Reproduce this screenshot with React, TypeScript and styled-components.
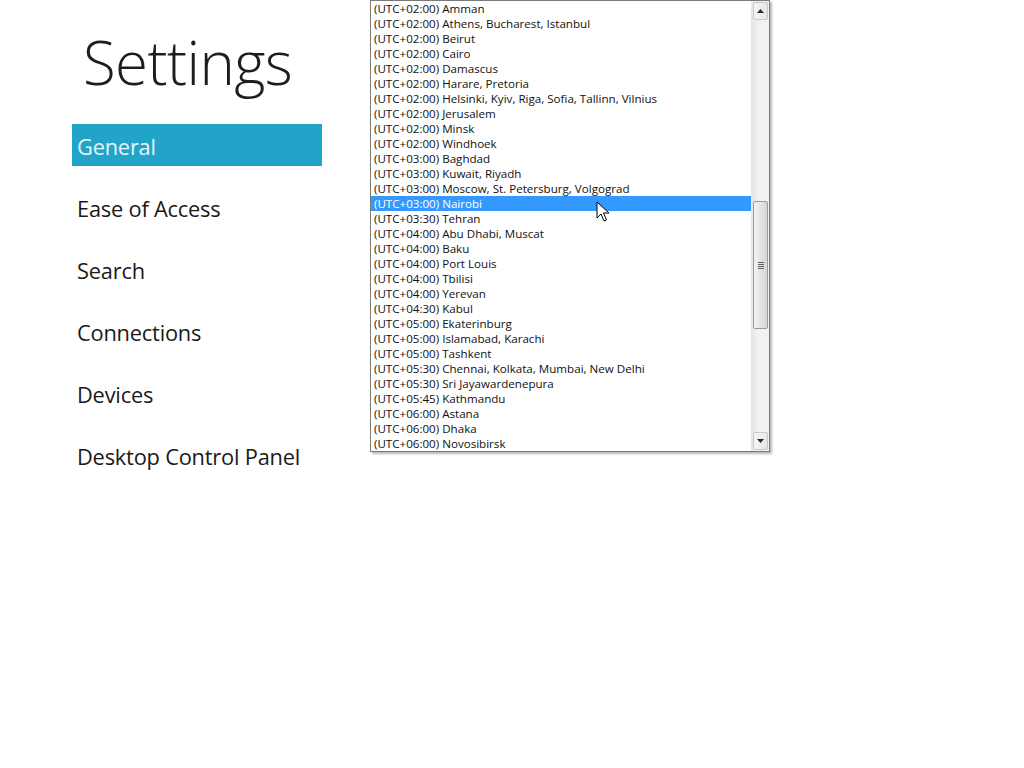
import React from "react";
import styled, { createGlobalStyle } from "styled-components";

const zones: string[] = [
    "(UTC+02:00) Amman",
    "(UTC+02:00) Athens, Bucharest, Istanbul",
    "(UTC+02:00) Beirut",
    "(UTC+02:00) Cairo",
    "(UTC+02:00) Damascus",
    "(UTC+02:00) Harare, Pretoria",
    "(UTC+02:00) Helsinki, Kyiv, Riga, Sofia, Tallinn, Vilnius",
    "(UTC+02:00) Jerusalem",
    "(UTC+02:00) Minsk",
    "(UTC+02:00) Windhoek",
    "(UTC+03:00) Baghdad",
    "(UTC+03:00) Kuwait, Riyadh",
    "(UTC+03:00) Moscow, St. Petersburg, Volgograd",
    "(UTC+03:00) Nairobi",
    "(UTC+03:30) Tehran",
    "(UTC+04:00) Abu Dhabi, Muscat",
    "(UTC+04:00) Baku",
    "(UTC+04:00) Port Louis",
    "(UTC+04:00) Tbilisi",
    "(UTC+04:00) Yerevan",
    "(UTC+04:30) Kabul",
    "(UTC+05:00) Ekaterinburg",
    "(UTC+05:00) Islamabad, Karachi",
    "(UTC+05:00) Tashkent",
    "(UTC+05:30) Chennai, Kolkata, Mumbai, New Delhi",
    "(UTC+05:30) Sri Jayawardenepura",
    "(UTC+05:45) Kathmandu",
    "(UTC+06:00) Astana",
    "(UTC+06:00) Dhaka",
    "(UTC+06:00) Novosibirsk",
];

const menu = ["General", "Ease of Access", "Search", "Connections", "Devices", "Desktop Control Panel"];

const App: React.FC = () => {
    const selected = 13;
    return (
        <>
            <GlobalStyle />
            <Page>
                <Sidebar>
                    <Title>Settings</Title>
                    <Menu>
                        {menu.map((m, i) => (
                            <MenuItem key={m} active={i === 0}>{m}</MenuItem>
                        ))}
                    </Menu>
                </Sidebar>
                <ListBox>
                    <Options>
                        {zones.map((z, i) => (
                            <Option key={z} selected={i === selected}>{z}</Option>
                        ))}
                    </Options>
                    <ScrollBar>
                        <ArrowButton>
                            <svg width="7" height="4" viewBox="0 0 7 4"><path d="M0 4 L3.5 0 L7 4 Z" fill="#2b2b2b" /></svg>
                        </ArrowButton>
                        <Track>
                            <Spacer style={{ height: 180 }} />
                            <Thumb>
                                <Grip><span /><span /><span /><span /></Grip>
                            </Thumb>
                        </Track>
                        <ArrowButton>
                            <svg width="7" height="4" viewBox="0 0 7 4"><path d="M0 0 L7 0 L3.5 4 Z" fill="#2b2b2b" /></svg>
                        </ArrowButton>
                    </ScrollBar>
                    <Cursor width="14" height="22" viewBox="0 0 14 22">
                        <path d="M1 1 L1 17 L5 13 L8 20 L10.5 19 L7.5 12 L13 12 Z" fill="#fff" stroke="#000" strokeWidth="1" strokeLinejoin="round" />
                    </Cursor>
                </ListBox>
            </Page>
        </>
    );
};

export default App;


const GlobalStyle = createGlobalStyle`
    html, body {
        margin: 0;
        padding: 0;
        background: #ffffff;
    }
    body {
        font-family: "Open Sans", "Noto Sans", sans-serif;
    }
`;

const Page = styled.div`
    display: flex;
    align-items: flex-start;
    width: 1024px;
    height: 768px;
    overflow: hidden;
    background: #ffffff;
`;

const Sidebar = styled.div`
    display: flex;
    flex-direction: column;
    width: 250px;
    padding: 20px 0 0 72px;
    margin-right: 48px;
`;

const Title = styled.h1`
    margin: 0 0 0 11px;
    height: 104px;
    font-family: "Open Sans", sans-serif;
    font-weight: 300;
    font-size: 60px;
    line-height: 84px;
    color: #1d1d1d;
    letter-spacing: -0.6px;
`;

const Menu = styled.div`
    display: flex;
    flex-direction: column;
    gap: 20px;
`;

const MenuItem = styled.div<{ active?: boolean }>`
    height: 42px;
    padding: 3px 0 0 5px;
    box-sizing: border-box;
    display: flex;
    align-items: center;
    font-family: "Open Sans", sans-serif;
    font-weight: 400;
    font-size: 21.8px;
    letter-spacing: -0.2px;
    color: ${p => (p.active ? "#e4f7fd" : "#1a1a1a")};
    background: ${p => (p.active ? "#22a3c8" : "transparent")};
`;

const ListBox = styled.div`
    position: relative;
    display: flex;
    width: 398px;
    height: 450px;
    border: 1px solid #7a7a7a;
    background: #ffffff;
    box-shadow: 2px 2px 2px rgba(0, 0, 0, 0.28);
`;

const Options = styled.div`
    flex: 1;
    display: flex;
    flex-direction: column;
`;

const Option = styled.div<{ selected?: boolean }>`
    height: 15px;
    line-height: 15px;
    padding-left: 3px;
    font-family: "Open Sans", sans-serif;
    font-size: 11.6px;
    white-space: nowrap;
    color: ${p => (p.selected ? "#ffffff" : "#111111")};
    background: ${p => (p.selected ? "#3399ff" : "transparent")};
`;

const ScrollBar = styled.div`
    width: 17px;
    display: flex;
    flex-direction: column;
    background: linear-gradient(to right, #e6e6e6, #f2f2f2 40%, #f2f2f2);
    border-left: 1px solid #e8e8e8;
`;

const ArrowButton = styled.div`
    height: 16px;
    margin: 1px 1px;
    display: flex;
    align-items: center;
    justify-content: center;
    border: 1px solid #c9c9c9;
    border-radius: 2px;
    background: linear-gradient(to right, #f6f6f6, #e6e6e6);
`;

const Track = styled.div`
    flex: 1;
    display: flex;
    flex-direction: column;
`;

const Spacer = styled.div``;

const Thumb = styled.div`
    height: 126px;
    margin: 0 1px;
    display: flex;
    align-items: center;
    justify-content: center;
    border: 1px solid #9a9a9a;
    border-radius: 2px;
    background: linear-gradient(to right, #f3f3f3, #e2e2e2 60%, #d6d6d6);
`;

const Grip = styled.div`
    display: flex;
    flex-direction: column;
    gap: 1px;
    span {
        display: block;
        width: 6px;
        height: 1px;
        background: #606060;
    }
`;

const Cursor = styled.svg`
    position: absolute;
    left: 225px;
    top: 200px;
`;
